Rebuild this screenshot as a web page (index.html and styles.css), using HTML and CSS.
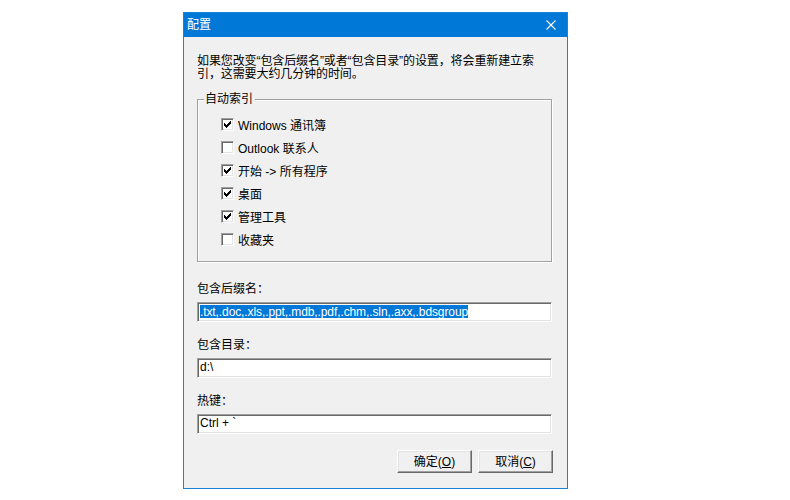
FILE: index.html
```html
<!DOCTYPE html>
<html lang="zh-CN">
<head>
<meta charset="utf-8">
<title>配置</title>
<link rel="stylesheet" href="styles.css">
</head>
<body>
<div class="window">
  <div class="titlebar">
    <span class="title">配置</span>
    <svg class="close" width="10" height="10" viewBox="0 0 10 10"><path d="M0.5 0.5 L9.5 9.5 M9.5 0.5 L0.5 9.5" stroke="#fff" stroke-width="1.1" fill="none"/></svg>
  </div>
  <div class="content">
    <p class="intro">如果您改变“包含后缀名”或者“包含目录”的设置，将会重新建立索<br>引，这需要大约几分钟的时间。</p>
    <div class="group">
      <span class="legend">自动索引</span>
      <div class="row"><span class="box checked"><svg width="7" height="7" viewBox="0 0 7 7"><path d="M0 2h1v1h1v1h1V3h1V2h1V1h1V0h1v3H6v1H5v1H4v1H3v1H2V6H1V5H0z" fill="#000"/></svg></span><span>Windows 通讯簿</span></div>
      <div class="row"><span class="box"></span><span>Outlook 联系人</span></div>
      <div class="row"><span class="box checked"><svg width="7" height="7" viewBox="0 0 7 7"><path d="M0 2h1v1h1v1h1V3h1V2h1V1h1V0h1v3H6v1H5v1H4v1H3v1H2V6H1V5H0z" fill="#000"/></svg></span><span>开始 -&gt; 所有程序</span></div>
      <div class="row"><span class="box checked"><svg width="7" height="7" viewBox="0 0 7 7"><path d="M0 2h1v1h1v1h1V3h1V2h1V1h1V0h1v3H6v1H5v1H4v1H3v1H2V6H1V5H0z" fill="#000"/></svg></span><span>桌面</span></div>
      <div class="row"><span class="box checked"><svg width="7" height="7" viewBox="0 0 7 7"><path d="M0 2h1v1h1v1h1V3h1V2h1V1h1V0h1v3H6v1H5v1H4v1H3v1H2V6H1V5H0z" fill="#000"/></svg></span><span>管理工具</span></div>
      <div class="row"><span class="box"></span><span>收藏夹</span></div>
    </div>
    <div class="field first">
      <div class="label">包含后缀名：</div>
      <div class="input"><span class="sel">.txt,.doc,.xls,.ppt,.mdb,.pdf,.chm,.sln,.axx,.bdsgroup</span></div>
    </div>
    <div class="field">
      <div class="label">包含目录：</div>
      <div class="input">d:\</div>
    </div>
    <div class="field">
      <div class="label">热键：</div>
      <div class="input">Ctrl + `</div>
    </div>
    <div class="buttons">
      <div class="btn">确定(<u>O</u>)</div>
      <div class="btn">取消(<u>C</u>)</div>
    </div>
  </div>
</div>
</body>
</html>
```
FILE: styles.css
```css
html, body {
  margin: 0;
  padding: 0;
  background: #ffffff;
}
body {
  font-family: "Liberation Sans", "Noto Sans CJK SC", sans-serif;
  font-size: 12px;
  color: #000;
}
.window {
  margin: 12px 0 0 183px;
  width: 385px;
  height: 477px;
  box-sizing: border-box;
  border: 1px solid #1883d7;
  background: #f0f0f0;
  display: flex;
  flex-direction: column;
}
.titlebar {
  height: 24px;
  background: #0078d7;
  color: #fff;
  display: flex;
  align-items: center;
  padding-left: 3px;
  font-size: 12px;
}
.title {
  flex: 1;
  line-height: 14px;
}
.close {
  margin-right: 11px;
  display: block;
}
.content {
  padding: 18px 15px 0 13px;
}
.intro {
  margin: 0;
  line-height: 13px;
  white-space: nowrap;
  letter-spacing: -0.1px;
}
.group {
  position: relative;
  margin-top: 18px;
  height: 163px;
  box-sizing: border-box;
  border: 1px solid #a0a0a0;
  box-shadow: inset 1px 1px 0 #ffffff, 1px 1px 0 #ffffff;
  padding: 13px 0 0 23px;
}
.legend {
  position: absolute;
  top: -8px;
  left: 6px;
  padding: 0 2px 0 1px;
  background: #f0f0f0;
  line-height: 14px;
}
.row {
  height: 23px;
  display: flex;
  align-items: center;
  gap: 4px;
}
.box {
  width: 13px;
  height: 13px;
  box-sizing: border-box;
  background: #fff;
  border: 1px solid;
  border-color: #a0a0a0 #ffffff #ffffff #a0a0a0;
  box-shadow: inset 1px 1px 0 #696969, inset -1px -1px 0 #e3e3e3;
  display: flex;
  align-items: center;
  justify-content: center;
}
.box svg {
  display: block;
}
.field {
  margin-top: 16px;
}
.field.first {
  margin-top: 20px;
}
.label {
  line-height: 14px;
  margin-bottom: 6px;
}
.input {
  height: 20px;
  box-sizing: border-box;
  background: #fff;
  border: 1px solid;
  border-color: #a0a0a0 #ffffff #ffffff #a0a0a0;
  box-shadow: inset 1px 1px 0 #696969, inset -1px -1px 0 #e3e3e3;
  padding: 2px 2px 0 2px;
  line-height: 13px;
  white-space: nowrap;
  overflow: hidden;
}
.sel {
  background: #0078d7;
  color: #fff;
  display: inline-block;
  line-height: 12px;
  padding-top: 1px;
  letter-spacing: -0.1px;
}
.buttons {
  margin-top: 16px;
  display: flex;
  justify-content: flex-end;
  gap: 6px;
  margin-right: -1px;
}
.btn {
  width: 75px;
  height: 23px;
  box-sizing: border-box;
  background: #f0f0f0;
  border: 1px solid;
  border-color: #ffffff #696969 #696969 #ffffff;
  box-shadow: inset -1px -1px 0 #a0a0a0, inset 1px 1px 0 #e3e3e3;
  display: flex;
  align-items: center;
  justify-content: center;
  line-height: 14px;
}
```
